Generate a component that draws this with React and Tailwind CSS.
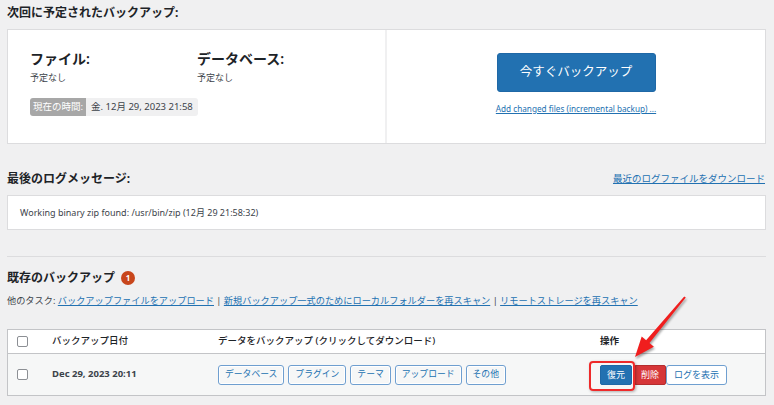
import React from "react";

const font = { fontFamily: '"Noto Sans", "Noto Sans CJK JP", sans-serif' };

function Btn({ children }) {
  return (
    <span className="inline-flex h-[20px] items-center rounded-[3px] border border-[#6f9fd0] bg-[#f6f7f7] px-[6px] text-[8.8px] text-[#2271b1] shadow-[0_0_0_1px_#fff_inset]">
      {children}
    </span>
  );
}

export default function App() {
  return (
    <div
      className="relative h-[405px] w-[774px] overflow-hidden bg-[#f0f0f1] pl-[7px] pr-[8px] pt-[4px] text-[#1d2327]"
      style={font}
    >
      {/* Next scheduled */}
      <div className="text-[12px] font-bold leading-[18px]">次回に予定されたバックアップ:</div>

      <div className="mt-[7px] flex h-[115px] border border-[#dcdcde] bg-white">
        <div className="w-[379px] border-r-2 border-[#f0f0f1] pl-[22px] pt-[20px]">
          <div className="grid grid-cols-[167px_1fr]">
            <div>
              <div className="text-[14px] font-semibold leading-[18px]">ファイル:</div>
              <div className="mt-[4px] text-[9px] leading-[12px] text-[#3c434a]">予定なし</div>
            </div>
            <div>
              <div className="text-[14px] font-semibold leading-[18px]">データベース:</div>
              <div className="mt-[4px] text-[9px] leading-[12px] text-[#3c434a]">予定なし</div>
            </div>
          </div>
          <div className="mt-[14px] inline-flex h-[18px] items-stretch text-[9.5px]">
            <span className="flex items-center rounded-l-[3px] bg-[#a7a7a7] px-[3px] text-white">現在の時間:</span>
            <span className="flex items-center rounded-r-[3px] bg-[#f0f0f1] px-[5px] text-[#3c434a]">金. 12月 29, 2023 21:58</span>
          </div>
        </div>
        <div className="flex flex-1 flex-col items-center pt-[23px]">
          <button className="h-[39px] w-[159px] rounded-[3px] border border-[#1f68a6] bg-[#2271b1] text-[12.5px] text-white">
            今すぐバックアップ
          </button>
          <a className="mt-[11px] text-[8.2px] leading-[12px] text-[#2271b1] underline">
            Add changed files (incremental backup) ...
          </a>
        </div>
      </div>

      {/* Last log */}
      <div className="mt-[26px] flex items-center justify-between pr-[1px]">
        <div className="text-[12px] font-bold leading-[18px]">最後のログメッセージ:</div>
        <a className="text-[9.5px] text-[#2271b1] underline">最近のログファイルをダウンロード</a>
      </div>
      <div className="mt-[7px] flex h-[35px] items-center border border-[#dcdcde] bg-white pl-[12px] text-[9px] text-[#3c434a]">
        Working binary zip found: /usr/bin/zip (12月 29 21:58:32)
      </div>

      <div className="mt-[26px] border-t border-[#dcdcde]" />

      {/* Existing backups */}
      <div className="mt-[12px] flex items-center gap-[6px]">
        <div className="text-[12px] font-bold leading-[18px]">既存のバックアップ</div>
        <span className="flex h-[14px] w-[14px] items-center justify-center rounded-full bg-[#c8461c] text-[8px] font-bold text-white">
          1
        </span>
      </div>
      <div className="mt-[7px] text-[9.2px] leading-[14px] text-[#3c434a]">
        他のタスク:{" "}
        <a className="text-[#2271b1] underline">バックアップファイルをアップロード</a> |{" "}
        <a className="text-[#2271b1] underline">新規バックアップ一式のためにローカルフォルダーを再スキャン</a> |{" "}
        <a className="text-[#2271b1] underline">リモートストレージを再スキャン</a>
      </div>

      <div className="mt-[21px] border border-[#c3c4c7] bg-white">
        <div className="grid h-[24px] grid-cols-[44px_166px_382px_1fr] items-center border-b border-[#c3c4c7] text-[9.5px] font-medium">
          <div className="pl-[9px]">
            <div className="h-[11px] w-[11px] rounded-[2px] border border-[#8c8f94] bg-white" />
          </div>
          <div>バックアップ日付</div>
          <div>データをバックアップ (クリックしてダウンロード)</div>
          <div className="font-bold">操作</div>
        </div>
        <div className="grid h-[41px] grid-cols-[44px_166px_382px_1fr] items-center bg-[#f6f7f7] text-[9.5px]">
          <div className="pl-[9px]">
            <div className="h-[11px] w-[11px] rounded-[2px] border border-[#8c8f94] bg-white" />
          </div>
          <div className="font-bold text-[#3c434a]">Dec 29, 2023 20:11</div>
          <div className="flex gap-[4px]">
            <Btn>データベース</Btn>
            <Btn>プラグイン</Btn>
            <Btn>テーマ</Btn>
            <Btn>アップロード</Btn>
            <Btn>その他</Btn>
          </div>
          <div className="flex">
            <span className="inline-flex h-[20px] items-center rounded-[2px] border border-[#1f68a6] bg-[#2271b1] px-[6px] text-[9px] text-white">
              復元
            </span>
            <span className="ml-[2px] inline-flex h-[20px] items-center rounded-[2px] border border-[#b32d2e] bg-[#d63638] px-[6px] text-[9px] text-white">
              削除
            </span>
            <span className="inline-flex h-[20px] items-center rounded-[3px] border border-[#6f9fd0] bg-white px-[7px] text-[9px] text-[#2271b1]">
              ログを表示
            </span>
          </div>
        </div>
      </div>

      {/* annotation overlay */}
      <div className="pointer-events-none absolute left-[589px] top-[361px] h-[30px] w-[46px] rounded-[4px] border-2 border-[#ee2a2a] shadow-[1px_1px_3px_rgba(0,0,0,0.3)]" />
      <svg
        className="pointer-events-none absolute left-0 top-0 drop-shadow-[1px_2px_1px_rgba(0,0,0,0.35)]"
        width="774"
        height="405"
      >
        <polygon
          points="635,357 653.9,346.7 649.5,343 685.8,297.6 684.2,296.4 646.1,340.2 641.7,336.5"
          fill="#f01e1e"
        />
      </svg>
    </div>
  );
}
